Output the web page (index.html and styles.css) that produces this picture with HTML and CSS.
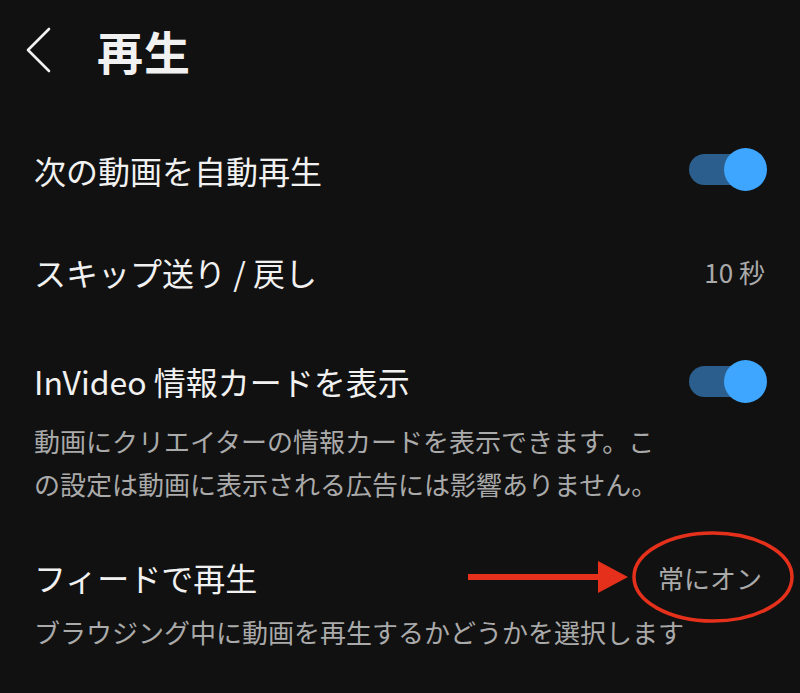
FILE: index.html
```html
<!DOCTYPE html>
<html lang="ja">
<head>
  <meta charset="UTF-8">
  <meta name="viewport" content="width=device-width, initial-scale=1.0">
  <title>再生</title>
  <link rel="stylesheet" href="styles.css">
</head>
<body>
  <div class="page">
    <div class="header">
      <a href="javascript:;" class="back">
        <svg width="26" height="46" viewBox="0 0 26 46">
          <polyline points="23,2 2,23 23,44" fill="none" stroke="#f1f1f1" stroke-width="2.6" stroke-linecap="round" stroke-linejoin="round"/>
        </svg>
      </a>
      <h1 class="title">再生</h1>
    </div>

    <ul class="list">
      <li class="item first">
        <div class="row">
          <span class="label">次の動画を自動再生</span>
          <span class="toggle on"><i class="track"></i><i class="knob"></i></span>
        </div>
      </li>
      <li class="item second">
        <div class="row">
          <span class="label">スキップ送り / 戻し</span>
          <span class="value">10 秒</span>
        </div>
      </li>
      <li class="item with-desc">
        <div class="row">
          <span class="label">InVideo 情報カードを表示</span>
          <span class="toggle on"><i class="track"></i><i class="knob"></i></span>
        </div>
        <p class="desc">動画にクリエイターの情報カードを表示できます。この設定は動画に表示される広告には影響ありません。</p>
      </li>
      <li class="item with-desc last">
        <div class="row">
          <span class="label">フィードで再生</span>
          <span class="value feed">常にオン</span>
          <!-- 赤い注釈 -->
          <svg class="annot" width="340" height="100" viewBox="0 0 340 100">
            <line x1="3" y1="49" x2="140" y2="49" stroke="#e5311c" stroke-width="6"/>
            <polygon points="133,33 163,49 133,65" fill="#e5311c"/>
            <ellipse cx="248" cy="49" rx="79" ry="44" fill="none" stroke="#e5311c" stroke-width="3.5"/>
          </svg>
        </div>
        <p class="desc">ブラウジング中に動画を再生するかどうかを選択します</p>
      </li>
    </ul>
  </div>
</body>
</html>
```

FILE: styles.css
```css
html, body{
  margin: 0;
  padding: 0;
  background-color: #111;
}

body{
  font-family: "Noto Sans CJK JP", "Noto Sans", sans-serif;
  color: #f1f1f1;
}

a{
  text-decoration: none;
}

ul{
  padding: 0;
  margin: 0;
  list-style: none;
}

.page{
  width: 800px;
  height: 693px;
  padding: 0 33px 0 34px;
  box-sizing: border-box;
  overflow: hidden;
}

.header{
  display: flex;
  align-items: center;
  height: 100px;
  margin-left: -8px;
}

.header .back{
  display: block;
  height: 46px;
}

.header .title{
  margin: 0 0 0 45px;
  font-size: 46px;
  font-weight: 700;
  line-height: 1;
  letter-spacing: 1px;
}

.list{
  padding-top: 19px;
}

.item{
  display: flex;
  flex-direction: column;
  justify-content: center;
  height: 101px;
}

.item.second{
  height: 103px;
}

.item.with-desc{
  height: auto;
  padding: 36px 0 14px;
}

.item.last{
  padding-top: 36px;
}

.row{
  position: relative;
  display: flex;
  align-items: center;
  justify-content: space-between;
  height: 44px;
}

.label{
  font-size: 32px;
  line-height: 44px;
  white-space: nowrap;
}

.value{
  font-size: 26px;
  color: #aaa;
  margin-right: 2px;
}

.value.feed{
  margin-right: 5px;
}

.desc{
  margin: 16px 0 0;
  width: 630px;
  font-size: 26px;
  line-height: 43px;
  color: #aaa;
}

.item.last .desc{
  margin-top: 11px;
  width: auto;
  white-space: nowrap;
}

.toggle{
  position: relative;
  display: block;
  width: 78px;
  height: 43px;
}

.toggle .track{
  position: absolute;
  left: 0;
  top: 6px;
  width: 62px;
  height: 31px;
  border-radius: 16px;
  background-color: #2b5e8c;
}

.toggle .knob{
  position: absolute;
  right: 0;
  top: 0;
  width: 43px;
  height: 43px;
  border-radius: 50%;
  background-color: #3ea6ff;
}

.annot{
  position: absolute;
  left: 431px;
  top: -27px;
  pointer-events: none;
}
```
